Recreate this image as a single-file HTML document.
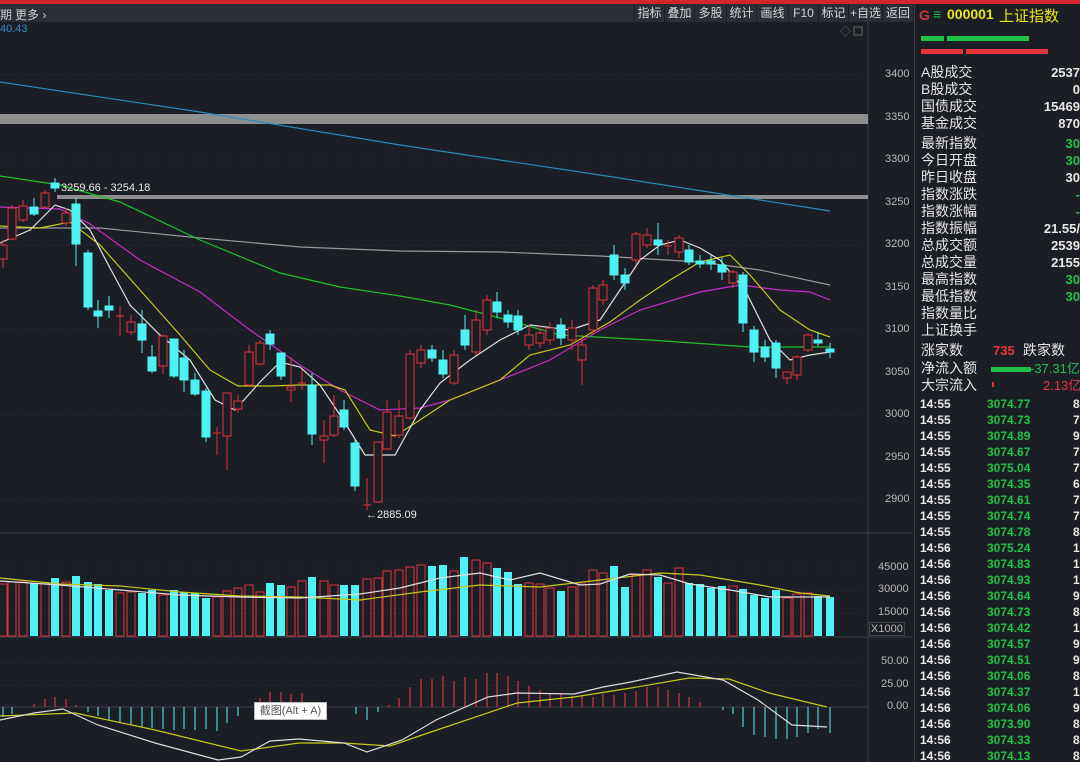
<!DOCTYPE html>
<html><head><meta charset="utf-8">
<style>
*{margin:0;padding:0;box-sizing:border-box}
body{width:1080px;height:762px;background:#1c1e25;overflow:hidden;position:relative;font-family:"Liberation Sans","Noto Sans CJK SC",sans-serif;color:#d8d8d8}
.top{position:absolute;left:0;top:0;width:1080px;height:4px;background:#d0262c}
.bar{position:absolute;left:0;top:4px;width:913px;height:18px;background:#2b2e37}
.bar span{position:absolute;top:2px;font-size:12px;color:#d0d0d0}
.btn{position:absolute;top:4px;height:18px;font-size:12px;line-height:18px;color:#d6d6d6;border-left:1px solid #1c1e25;text-align:center}
.rp{position:absolute;left:914px;top:4px;width:166px;height:758px;background:#1c1e25;border-left:1px solid #3a3d47;overflow:hidden}
.rp div{white-space:nowrap}
.row{position:absolute;left:6px;font-size:14px;line-height:17px;color:#e6e6e6;white-space:nowrap}
.val{position:absolute;right:0;font-size:13px;font-weight:bold;line-height:17px}
.t{position:absolute;left:5px;font-size:12px;font-weight:bold;color:#e8e8e8}
.p{position:absolute;left:72px;font-size:12px;font-weight:bold;color:#1fc246}
.v{position:absolute;left:158px;font-size:12px;font-weight:bold;color:#e8e8e8}
.ax{position:absolute;font-size:11px;color:#b8b8b8}
</style></head><body>
<div class="top"></div>
<div class="bar"><span style="left:0">期</span><span style="left:15px">更多 ›</span></div>
<div class="btn" style="left:634px;width:30px">指标</div>
<div class="btn" style="left:664px;width:30px">叠加</div>
<div class="btn" style="left:694px;width:32px">多股</div>
<div class="btn" style="left:726px;width:30px">统计</div>
<div class="btn" style="left:756px;width:32px">画线</div>
<div class="btn" style="left:788px;width:30px">F10</div>
<div class="btn" style="left:818px;width:30px">标记</div>
<div class="btn" style="left:848px;width:34px">+自选</div>
<div class="btn" style="left:882px;width:31px">返回</div>
<div style="position:absolute;left:0;top:23px;font-size:11px;color:#2a8fc0">40.43</div>

<svg width="913" height="762" style="position:absolute;left:0;top:0">
<g stroke="#2e313a" stroke-dasharray="1,2" stroke-width="1">
<line x1="0" y1="75" x2="868" y2="75"/><line x1="0" y1="160" x2="868" y2="160"/><line x1="0" y1="245" x2="868" y2="245"/><line x1="0" y1="330" x2="868" y2="330"/><line x1="0" y1="415" x2="868" y2="415"/><line x1="0" y1="500" x2="868" y2="500"/>
<line x1="0" y1="568" x2="868" y2="568"/><line x1="0" y1="590" x2="868" y2="590"/><line x1="0" y1="613" x2="868" y2="613"/>
<line x1="0" y1="662" x2="868" y2="662"/><line x1="0" y1="685" x2="868" y2="685"/>
</g>
<line x1="868" y1="22" x2="868" y2="762" stroke="#3a3d47"/>
<line x1="0" y1="533" x2="913" y2="533" stroke="#3a3d47"/>
<line x1="0" y1="637" x2="913" y2="637" stroke="#3a3d47"/>
<line x1="0" y1="707" x2="868" y2="707" stroke="#3a3d47"/>
<rect x="0" y="114" width="868" height="10" fill="#8e8e8e"/>
<rect x="57" y="195" width="811" height="4" fill="#8e8e8e"/>
<text x="840" y="35" fill="#666" font-size="11">◇</text><rect x="854" y="27" width="8" height="8" fill="none" stroke="#666"/>
<polyline fill="none" stroke="#2a8bb5" stroke-width="1.2" points="0,82 200,112 400,145 600,175 760,200 830,211"/>
<polyline fill="none" stroke="#9a9a9a" stroke-width="1.2" points="0,228 100,228 200,238 300,247 400,251 500,252 600,256 700,262 760,270 830,285"/>
<polyline fill="none" stroke="#1fbf2a" stroke-width="1.2" points="0,176 60,185 120,202 200,240 280,273 340,287 400,296 450,305 500,318 560,335 650,340 750,347 830,347"/>
<polyline fill="none" stroke="#c52ec5" stroke-width="1.2" points="0,207 60,209 90,224 140,260 200,292 250,330 300,365 340,390 380,410 420,408 450,400 500,380 550,360 600,330 640,310 700,292 740,285 780,290 810,292 830,300"/>
<polyline fill="none" stroke="#c8c81a" stroke-width="1.2" points="0,226 40,228 70,222 100,245 140,290 180,335 210,370 238,386 270,386 300,385 330,385 345,390 370,430 395,436 420,420 450,400 500,380 530,355 570,345 610,322 640,300 670,280 700,262 730,255 750,275 780,310 810,330 830,337"/>
<polyline fill="none" stroke="#e0e0e0" stroke-width="1.2" points="0,243 30,230 55,205 70,210 90,230 110,268 130,305 160,335 190,360 215,400 235,410 260,382 280,362 300,367 320,385 340,415 365,455 395,455 420,410 440,383 470,360 500,340 530,325 570,330 600,320 620,290 640,260 660,245 680,240 700,248 720,260 745,290 770,340 790,360 810,355 830,352"/>
<g id="c">
<g stroke="#e0343c" fill="none">
<line x1="3" y1="240" x2="3" y2="268"/><rect x="-1" y="245" width="8" height="14" fill="#1c1e25"/>
<line x1="12" y1="205" x2="12" y2="240"/><rect x="8" y="208" width="8" height="31" fill="#1c1e25"/>
<line x1="23" y1="200" x2="23" y2="222"/><rect x="19" y="206" width="8" height="14" fill="#1c1e25"/>
<line x1="45" y1="190" x2="45" y2="208"/><rect x="41" y="193" width="8" height="14" fill="#1c1e25"/>
<line x1="66" y1="208" x2="66" y2="226"/><rect x="62" y="213" width="8" height="10" fill="#1c1e25"/>
<line x1="120" y1="306" x2="120" y2="336"/><line x1="116" y1="316" x2="124" y2="316"/>
<line x1="131" y1="315" x2="131" y2="335"/><rect x="127" y="322" width="8" height="10" fill="#1c1e25"/>
<line x1="163" y1="334" x2="163" y2="374"/><rect x="159" y="336" width="8" height="30" fill="#1c1e25"/>
<line x1="217" y1="427" x2="217" y2="455"/><line x1="213" y1="433" x2="221" y2="433"/>
<line x1="227" y1="393" x2="227" y2="470"/><rect x="223" y="393" width="8" height="43" fill="#1c1e25"/>
<line x1="238" y1="395" x2="238" y2="413"/><rect x="234" y="401" width="8" height="8" fill="#1c1e25"/>
<line x1="249" y1="345" x2="249" y2="386"/><rect x="245" y="352" width="8" height="33" fill="#1c1e25"/>
<line x1="260" y1="340" x2="260" y2="365"/><rect x="256" y="343" width="8" height="21" fill="#1c1e25"/>
<line x1="291" y1="357" x2="291" y2="402"/><rect x="287" y="387" width="8" height="3" fill="#1c1e25"/>
<line x1="302" y1="370" x2="302" y2="390"/><line x1="298" y1="383" x2="306" y2="383"/>
<line x1="324" y1="420" x2="324" y2="463"/><rect x="320" y="436" width="8" height="4" fill="#1c1e25"/>
<line x1="334" y1="395" x2="334" y2="437"/><rect x="330" y="416" width="8" height="19" fill="#1c1e25"/>
<line x1="367" y1="478" x2="367" y2="510"/><line x1="363" y1="505" x2="371" y2="505"/>
<line x1="378" y1="442" x2="378" y2="503"/><rect x="374" y="442" width="8" height="60" fill="#1c1e25"/>
<line x1="387" y1="400" x2="387" y2="450"/><rect x="383" y="412" width="8" height="37" fill="#1c1e25"/>
<line x1="399" y1="400" x2="399" y2="438"/><rect x="395" y="416" width="8" height="19" fill="#1c1e25"/>
<line x1="410" y1="350" x2="410" y2="420"/><rect x="406" y="354" width="8" height="64" fill="#1c1e25"/>
<line x1="421" y1="345" x2="421" y2="368"/><rect x="417" y="350" width="8" height="13" fill="#1c1e25"/>
<line x1="454" y1="350" x2="454" y2="385"/><rect x="450" y="355" width="8" height="28" fill="#1c1e25"/>
<line x1="476" y1="310" x2="476" y2="355"/><rect x="472" y="320" width="8" height="32" fill="#1c1e25"/>
<line x1="487" y1="295" x2="487" y2="335"/><rect x="483" y="300" width="8" height="30" fill="#1c1e25"/>
<line x1="529" y1="325" x2="529" y2="350"/><rect x="525" y="335" width="8" height="10" fill="#1c1e25"/>
<line x1="540" y1="325" x2="540" y2="348"/><rect x="536" y="333" width="8" height="10" fill="#1c1e25"/>
<line x1="550" y1="322" x2="550" y2="345"/><rect x="546" y="328" width="8" height="12" fill="#1c1e25"/>
<line x1="572" y1="320" x2="572" y2="350"/><rect x="568" y="328" width="8" height="12" fill="#1c1e25"/>
<line x1="582" y1="335" x2="582" y2="385"/><rect x="578" y="345" width="8" height="15" fill="#1c1e25"/>
<line x1="593" y1="285" x2="593" y2="335"/><rect x="589" y="288" width="8" height="42" fill="#1c1e25"/>
<line x1="603" y1="280" x2="603" y2="305"/><rect x="599" y="285" width="8" height="15" fill="#1c1e25"/>
<line x1="636" y1="232" x2="636" y2="265"/><rect x="632" y="234" width="8" height="26" fill="#1c1e25"/>
<line x1="647" y1="228" x2="647" y2="248"/><rect x="643" y="235" width="8" height="10" fill="#1c1e25"/>
<line x1="668" y1="240" x2="668" y2="255"/><line x1="664" y1="246" x2="672" y2="246"/>
<line x1="679" y1="235" x2="679" y2="258"/><rect x="675" y="238" width="8" height="14" fill="#1c1e25"/>
<line x1="733" y1="270" x2="733" y2="288"/><rect x="729" y="272" width="8" height="11" fill="#1c1e25"/>
<line x1="787" y1="373" x2="787" y2="384"/><rect x="783" y="372" width="8" height="6" fill="#1c1e25"/>
<line x1="797" y1="355" x2="797" y2="380"/><rect x="793" y="357" width="8" height="18" fill="#1c1e25"/>
<line x1="808" y1="333" x2="808" y2="352"/><rect x="804" y="335" width="8" height="15" fill="#1c1e25"/>
</g>
<g stroke="#4ff2f4" fill="#4ff2f4">
<line x1="34" y1="198" x2="34" y2="216"/><rect x="30" y="207" width="8" height="7"/>
<line x1="55" y1="178" x2="55" y2="192"/><rect x="51" y="183" width="8" height="5"/>
<line x1="76" y1="198" x2="76" y2="266"/><rect x="72" y="204" width="8" height="40"/>
<line x1="88" y1="250" x2="88" y2="310"/><rect x="84" y="253" width="8" height="54"/>
<line x1="98" y1="300" x2="98" y2="328"/><rect x="94" y="311" width="8" height="5"/>
<line x1="109" y1="296" x2="109" y2="318"/><rect x="105" y="306" width="8" height="4"/>
<line x1="142" y1="310" x2="142" y2="353"/><rect x="138" y="324" width="8" height="16"/>
<line x1="152" y1="345" x2="152" y2="373"/><rect x="148" y="357" width="8" height="14"/>
<line x1="174" y1="339" x2="174" y2="378"/><rect x="170" y="339" width="8" height="37"/>
<line x1="184" y1="350" x2="184" y2="392"/><rect x="180" y="358" width="8" height="22"/>
<line x1="195" y1="373" x2="195" y2="396"/><rect x="191" y="380" width="8" height="14"/>
<line x1="206" y1="388" x2="206" y2="442"/><rect x="202" y="391" width="8" height="46"/>
<line x1="270" y1="330" x2="270" y2="350"/><rect x="266" y="334" width="8" height="10"/>
<line x1="281" y1="353" x2="281" y2="380"/><rect x="277" y="353" width="8" height="23"/>
<line x1="312" y1="373" x2="312" y2="445"/><rect x="308" y="385" width="8" height="49"/>
<line x1="344" y1="400" x2="344" y2="430"/><rect x="340" y="410" width="8" height="17"/>
<line x1="355" y1="440" x2="355" y2="491"/><rect x="351" y="443" width="8" height="43"/>
<line x1="432" y1="345" x2="432" y2="362"/><rect x="428" y="350" width="8" height="8"/>
<line x1="443" y1="350" x2="443" y2="378"/><rect x="439" y="360" width="8" height="14"/>
<line x1="465" y1="315" x2="465" y2="350"/><rect x="461" y="330" width="8" height="15"/>
<line x1="497" y1="292" x2="497" y2="318"/><rect x="493" y="302" width="8" height="10"/>
<line x1="508" y1="310" x2="508" y2="328"/><rect x="504" y="315" width="8" height="7"/>
<line x1="518" y1="310" x2="518" y2="335"/><rect x="514" y="316" width="8" height="14"/>
<line x1="561" y1="318" x2="561" y2="345"/><rect x="557" y="325" width="8" height="13"/>
<line x1="614" y1="245" x2="614" y2="280"/><rect x="610" y="255" width="8" height="20"/>
<line x1="625" y1="268" x2="625" y2="290"/><rect x="621" y="275" width="8" height="8"/>
<line x1="658" y1="223" x2="658" y2="255"/><rect x="654" y="240" width="8" height="5"/>
<line x1="689" y1="245" x2="689" y2="265"/><rect x="685" y="250" width="8" height="12"/>
<line x1="700" y1="255" x2="700" y2="268"/><rect x="696" y="261" width="8" height="3"/>
<line x1="711" y1="255" x2="711" y2="270"/><rect x="707" y="261" width="8" height="3"/>
<line x1="722" y1="258" x2="722" y2="280"/><rect x="718" y="265" width="8" height="7"/>
<line x1="743" y1="272" x2="743" y2="332"/><rect x="739" y="275" width="8" height="48"/>
<line x1="754" y1="326" x2="754" y2="362"/><rect x="750" y="330" width="8" height="22"/>
<line x1="765" y1="340" x2="765" y2="362"/><rect x="761" y="347" width="8" height="10"/>
<line x1="776" y1="340" x2="776" y2="378"/><rect x="772" y="343" width="8" height="25"/>
<line x1="818" y1="332" x2="818" y2="346"/><rect x="814" y="340" width="8" height="3"/>
<line x1="830" y1="343" x2="830" y2="358"/><rect x="826" y="349" width="8" height="3"/>
</g></g>
<text x="61" y="191" fill="#e8e8e8" font-size="11">3259.66 - 3254.18</text>
<text x="366" y="518" fill="#e8e8e8" font-size="11">←2885.09</text>
<g stroke="#e0343c" fill="none">
<rect x="-1" y="584" width="8" height="52"/><rect x="8" y="582" width="8" height="54"/><rect x="19" y="582" width="8" height="54"/><rect x="41" y="584" width="8" height="52"/><rect x="62" y="582" width="8" height="54"/><rect x="116" y="593" width="8" height="43"/><rect x="127" y="592" width="8" height="44"/><rect x="159" y="595" width="8" height="41"/><rect x="213" y="597" width="8" height="39"/><rect x="223" y="591" width="8" height="45"/><rect x="234" y="588" width="8" height="48"/><rect x="245" y="585" width="8" height="51"/><rect x="256" y="592" width="8" height="44"/><rect x="287" y="587" width="8" height="49"/><rect x="298" y="581" width="8" height="55"/><rect x="320" y="581" width="8" height="55"/><rect x="330" y="585" width="8" height="51"/><rect x="363" y="579" width="8" height="57"/><rect x="374" y="578" width="8" height="58"/><rect x="383" y="571" width="8" height="65"/><rect x="395" y="570" width="8" height="66"/><rect x="406" y="567" width="8" height="69"/><rect x="417" y="565" width="8" height="71"/><rect x="450" y="571" width="8" height="65"/><rect x="472" y="560" width="8" height="76"/><rect x="483" y="563" width="8" height="73"/><rect x="525" y="583" width="8" height="53"/><rect x="536" y="584" width="8" height="52"/><rect x="546" y="588" width="8" height="48"/><rect x="568" y="587" width="8" height="49"/><rect x="578" y="584" width="8" height="52"/><rect x="589" y="570" width="8" height="66"/><rect x="599" y="573" width="8" height="63"/><rect x="632" y="575" width="8" height="61"/><rect x="643" y="570" width="8" height="66"/><rect x="664" y="583" width="8" height="53"/><rect x="675" y="568" width="8" height="68"/><rect x="729" y="586" width="8" height="50"/><rect x="783" y="598" width="8" height="38"/><rect x="793" y="594" width="8" height="42"/><rect x="804" y="593" width="8" height="43"/>
</g>
<g fill="#4ff2f4">
<rect x="30" y="583" width="8" height="53"/><rect x="51" y="578" width="8" height="58"/><rect x="72" y="576" width="8" height="60"/><rect x="84" y="582" width="8" height="54"/><rect x="94" y="584" width="8" height="52"/><rect x="105" y="590" width="8" height="46"/><rect x="138" y="593" width="8" height="43"/><rect x="148" y="590" width="8" height="46"/><rect x="170" y="590" width="8" height="46"/><rect x="180" y="592" width="8" height="44"/><rect x="191" y="593" width="8" height="43"/><rect x="202" y="598" width="8" height="38"/><rect x="266" y="583" width="8" height="53"/><rect x="277" y="585" width="8" height="51"/><rect x="308" y="577" width="8" height="59"/><rect x="340" y="585" width="8" height="51"/><rect x="351" y="585" width="8" height="51"/><rect x="428" y="566" width="8" height="70"/><rect x="439" y="565" width="8" height="71"/><rect x="460" y="557" width="8" height="79"/><rect x="493" y="568" width="8" height="68"/><rect x="504" y="572" width="8" height="64"/><rect x="514" y="584" width="8" height="52"/><rect x="557" y="591" width="8" height="45"/><rect x="610" y="566" width="8" height="70"/><rect x="621" y="587" width="8" height="49"/><rect x="654" y="577" width="8" height="59"/><rect x="685" y="583" width="8" height="53"/><rect x="696" y="584" width="8" height="52"/><rect x="707" y="588" width="8" height="48"/><rect x="718" y="586" width="8" height="50"/><rect x="739" y="589" width="8" height="47"/><rect x="750" y="595" width="8" height="41"/><rect x="761" y="598" width="8" height="38"/><rect x="772" y="590" width="8" height="46"/><rect x="814" y="596" width="8" height="40"/><rect x="826" y="597" width="8" height="39"/>
</g>
<polyline fill="none" stroke="#c8c81a" stroke-width="1.2" points="0,578 60,584 120,586 180,592 240,596 300,597 360,600 420,592 480,585 540,587 600,580 660,573 700,575 760,585 800,593 830,596"/>
<polyline fill="none" stroke="#e0e0e0" stroke-width="1.2" points="0,581 60,585 120,590 180,595 240,597 300,598 360,594 400,588 440,578 480,573 510,580 540,573 580,585 600,584 630,574 660,575 690,584 730,590 770,597 800,597 830,597"/>
<g stroke="#4fd0d4" stroke-width="1.2">
<line x1="3" y1="707" x2="3" y2="717"/><line x1="12" y1="707" x2="12" y2="714"/><line x1="88" y1="707" x2="88" y2="712"/><line x1="98" y1="707" x2="98" y2="716"/><line x1="109" y1="707" x2="109" y2="720"/><line x1="120" y1="707" x2="120" y2="722"/><line x1="131" y1="707" x2="131" y2="725"/><line x1="142" y1="707" x2="142" y2="727"/><line x1="152" y1="707" x2="152" y2="728"/><line x1="163" y1="707" x2="163" y2="729"/><line x1="174" y1="707" x2="174" y2="730"/><line x1="184" y1="707" x2="184" y2="729"/><line x1="195" y1="707" x2="195" y2="730"/><line x1="206" y1="707" x2="206" y2="729"/><line x1="217" y1="707" x2="217" y2="731"/><line x1="227" y1="707" x2="227" y2="723"/><line x1="238" y1="707" x2="238" y2="716"/>
<line x1="356" y1="707" x2="356" y2="714"/><line x1="367" y1="707" x2="367" y2="720"/><line x1="378" y1="707" x2="378" y2="712"/>
<line x1="723" y1="707" x2="723" y2="710"/><line x1="733" y1="707" x2="733" y2="714"/><line x1="743" y1="707" x2="743" y2="727"/><line x1="754" y1="707" x2="754" y2="735"/><line x1="765" y1="707" x2="765" y2="737"/><line x1="776" y1="707" x2="776" y2="739"/><line x1="787" y1="707" x2="787" y2="739"/><line x1="797" y1="707" x2="797" y2="737"/><line x1="808" y1="707" x2="808" y2="733"/><line x1="818" y1="707" x2="818" y2="729"/><line x1="830" y1="707" x2="830" y2="733"/>
</g>
<g stroke="#d8343c" stroke-width="1.2">
<line x1="34" y1="707" x2="34" y2="704"/><line x1="45" y1="707" x2="45" y2="699"/><line x1="55" y1="707" x2="55" y2="697"/><line x1="66" y1="707" x2="66" y2="699"/><line x1="76" y1="707" x2="76" y2="705"/>
<line x1="260" y1="707" x2="260" y2="698"/><line x1="270" y1="707" x2="270" y2="692"/><line x1="281" y1="707" x2="281" y2="692"/><line x1="291" y1="707" x2="291" y2="694"/><line x1="302" y1="707" x2="302" y2="693"/>
<line x1="389" y1="707" x2="389" y2="705"/><line x1="399" y1="707" x2="399" y2="698"/><line x1="410" y1="707" x2="410" y2="687"/><line x1="421" y1="707" x2="421" y2="679"/><line x1="432" y1="707" x2="432" y2="679"/><line x1="443" y1="707" x2="443" y2="676"/><line x1="454" y1="707" x2="454" y2="681"/><line x1="465" y1="707" x2="465" y2="677"/><line x1="476" y1="707" x2="476" y2="679"/><line x1="487" y1="707" x2="487" y2="673"/><line x1="497" y1="707" x2="497" y2="673"/><line x1="508" y1="707" x2="508" y2="676"/><line x1="518" y1="707" x2="518" y2="681"/><line x1="529" y1="707" x2="529" y2="686"/><line x1="540" y1="707" x2="540" y2="690"/><line x1="550" y1="707" x2="550" y2="693"/><line x1="561" y1="707" x2="561" y2="693"/><line x1="572" y1="707" x2="572" y2="696"/><line x1="582" y1="707" x2="582" y2="696"/><line x1="593" y1="707" x2="593" y2="697"/><line x1="603" y1="707" x2="603" y2="694"/><line x1="614" y1="707" x2="614" y2="695"/><line x1="625" y1="707" x2="625" y2="693"/><line x1="636" y1="707" x2="636" y2="691"/><line x1="647" y1="707" x2="647" y2="687"/><line x1="658" y1="707" x2="658" y2="687"/><line x1="668" y1="707" x2="668" y2="690"/><line x1="679" y1="707" x2="679" y2="693"/><line x1="689" y1="707" x2="689" y2="697"/><line x1="700" y1="707" x2="700" y2="702"/>
</g>
<polyline fill="none" stroke="#c8c81a" stroke-width="1.2" points="0,716 75,713 155,730 241,751 299,743 344,743 390,746 431,732 517,703 574,697 631,688 689,678 729,679 769,693 827,707"/>
<polyline fill="none" stroke="#dcdcdc" stroke-width="1.2" points="0,720 34,713 63,709 98,725 155,743 218,760 241,757 270,741 299,739 344,743 367,752 402,740 436,720 488,697 517,693 574,694 603,687 631,682 677,672 723,680 758,700 792,725 827,727"/>
</svg>
<div style="position:absolute;left:254px;top:702px;width:73px;height:18px;background:#fff;border:1px solid #bbb;font-size:11px;color:#555;line-height:16px;text-align:center">截图(Alt + A)</div>

<div class="ax" style="left:885px;top:68px">3400</div>
<div class="ax" style="left:885px;top:111px">3350</div>
<div class="ax" style="left:885px;top:153px">3300</div>
<div class="ax" style="left:885px;top:196px">3250</div>
<div class="ax" style="left:885px;top:238px">3200</div>
<div class="ax" style="left:885px;top:281px">3150</div>
<div class="ax" style="left:885px;top:323px">3100</div>
<div class="ax" style="left:885px;top:366px">3050</div>
<div class="ax" style="left:885px;top:408px">3000</div>
<div class="ax" style="left:885px;top:451px">2950</div>
<div class="ax" style="left:885px;top:493px">2900</div>
<div class="ax" style="left:878px;top:561px">45000</div>
<div class="ax" style="left:878px;top:583px">30000</div>
<div class="ax" style="left:878px;top:606px">15000</div>
<div class="ax" style="left:869px;top:622px;border:1px solid #444;padding:0 1px">X1000</div>
<div class="ax" style="left:881px;top:655px">50.00</div>
<div class="ax" style="left:881px;top:678px">25.00</div>
<div class="ax" style="left:887px;top:700px">0.00</div>

<div class="rp">
<div style="position:absolute;left:4px;top:3px;font-size:14px;color:#d0343c;font-weight:bold">G</div>
<div style="position:absolute;left:18px;top:2px;font-size:14px;color:#1fc246">≡</div>
<div style="position:absolute;left:32px;top:2px;font-size:14px;color:#e8e818;font-weight:bold">000001</div>
<div style="position:absolute;left:84px;top:1px;font-size:15px;color:#e8e818">上证指数</div>
<div style="position:absolute;left:6px;top:32px;width:23px;height:5px;background:#1fc246"></div>
<div style="position:absolute;left:32px;top:32px;width:82px;height:5px;background:#1fc246"></div>
<div style="position:absolute;left:6px;top:45px;width:42px;height:5px;background:#e8343c"></div>
<div style="position:absolute;left:51px;top:45px;width:82px;height:5px;background:#e8343c"></div>
<div class="row" style="top:60px">A股成交</div><div class="val" style="top:60px;color:#e8e8e8">2537</div>
<div class="row" style="top:77px">B股成交</div><div class="val" style="top:77px;color:#e8e8e8">0</div>
<div class="row" style="top:94px">国债成交</div><div class="val" style="top:94px;color:#e8e8e8">15469</div>
<div class="row" style="top:111px">基金成交</div><div class="val" style="top:111px;color:#e8e8e8">870</div>
<div class="row" style="top:131px">最新指数</div><div class="val" style="top:131px;color:#1fc246">30</div>
<div class="row" style="top:148px">今日开盘</div><div class="val" style="top:148px;color:#1fc246">30</div>
<div class="row" style="top:165px">昨日收盘</div><div class="val" style="top:165px;color:#e8e8e8">30</div>
<div class="row" style="top:182px">指数涨跌</div><div class="val" style="top:182px;color:#1fc246">-</div>
<div class="row" style="top:199px">指数涨幅</div><div class="val" style="top:199px;color:#1fc246">-</div>
<div class="row" style="top:216px">指数振幅</div><div class="val" style="top:216px;color:#e8e8e8">21.55/</div>
<div class="row" style="top:233px">总成交额</div><div class="val" style="top:233px;color:#e8e8e8">2539</div>
<div class="row" style="top:250px">总成交量</div><div class="val" style="top:250px;color:#e8e8e8">2155</div>
<div class="row" style="top:267px">最高指数</div><div class="val" style="top:267px;color:#1fc246">30</div>
<div class="row" style="top:284px">最低指数</div><div class="val" style="top:284px;color:#1fc246">30</div>
<div class="row" style="top:301px">指数量比</div>
<div class="row" style="top:318px">上证换手</div>
<div class="row" style="top:338px">涨家数</div>
<div style="position:absolute;left:78px;top:339px;font-size:13px;font-weight:bold;color:#e8343c">735</div>
<div class="row" style="left:108px;top:338px">跌家数</div>
<div class="row" style="top:356px">净流入额</div>
<div style="position:absolute;left:76px;top:363px;width:40px;height:5px;background:#1fc246"></div>
<div style="position:absolute;left:115px;top:356px;font-size:13px;color:#1fc246;line-height:17px">-37.31亿</div>
<div class="row" style="top:373px">大宗流入</div>
<div style="position:absolute;left:77px;top:378px;width:2px;height:5px;background:#e8343c"></div>
<div style="position:absolute;left:128px;top:373px;font-size:13px;color:#e8343c;line-height:17px">2.13亿</div>
<div class="t" style="top:393px">14:55</div><div class="p" style="top:393px">3074.77</div><div class="v" style="top:393px">8</div>
<div class="t" style="top:409px">14:55</div><div class="p" style="top:409px">3074.73</div><div class="v" style="top:409px">7</div>
<div class="t" style="top:425px">14:55</div><div class="p" style="top:425px">3074.89</div><div class="v" style="top:425px">9</div>
<div class="t" style="top:441px">14:55</div><div class="p" style="top:441px">3074.67</div><div class="v" style="top:441px">7</div>
<div class="t" style="top:457px">14:55</div><div class="p" style="top:457px">3075.04</div><div class="v" style="top:457px">7</div>
<div class="t" style="top:473px">14:55</div><div class="p" style="top:473px">3074.35</div><div class="v" style="top:473px">6</div>
<div class="t" style="top:489px">14:55</div><div class="p" style="top:489px">3074.61</div><div class="v" style="top:489px">7</div>
<div class="t" style="top:505px">14:55</div><div class="p" style="top:505px">3074.74</div><div class="v" style="top:505px">7</div>
<div class="t" style="top:521px">14:55</div><div class="p" style="top:521px">3074.78</div><div class="v" style="top:521px">8</div>
<div class="t" style="top:537px">14:56</div><div class="p" style="top:537px">3075.24</div><div class="v" style="top:537px">1</div>
<div class="t" style="top:553px">14:56</div><div class="p" style="top:553px">3074.83</div><div class="v" style="top:553px">1</div>
<div class="t" style="top:569px">14:56</div><div class="p" style="top:569px">3074.93</div><div class="v" style="top:569px">1</div>
<div class="t" style="top:585px">14:56</div><div class="p" style="top:585px">3074.64</div><div class="v" style="top:585px">9</div>
<div class="t" style="top:601px">14:56</div><div class="p" style="top:601px">3074.73</div><div class="v" style="top:601px">8</div>
<div class="t" style="top:617px">14:56</div><div class="p" style="top:617px">3074.42</div><div class="v" style="top:617px">1</div>
<div class="t" style="top:633px">14:56</div><div class="p" style="top:633px">3074.57</div><div class="v" style="top:633px">9</div>
<div class="t" style="top:649px">14:56</div><div class="p" style="top:649px">3074.51</div><div class="v" style="top:649px">9</div>
<div class="t" style="top:665px">14:56</div><div class="p" style="top:665px">3074.06</div><div class="v" style="top:665px">8</div>
<div class="t" style="top:681px">14:56</div><div class="p" style="top:681px">3074.37</div><div class="v" style="top:681px">1</div>
<div class="t" style="top:697px">14:56</div><div class="p" style="top:697px">3074.06</div><div class="v" style="top:697px">9</div>
<div class="t" style="top:713px">14:56</div><div class="p" style="top:713px">3073.90</div><div class="v" style="top:713px">8</div>
<div class="t" style="top:729px">14:56</div><div class="p" style="top:729px">3074.33</div><div class="v" style="top:729px">8</div>
<div class="t" style="top:745px">14:56</div><div class="p" style="top:745px">3074.13</div><div class="v" style="top:745px">8</div>
</div>
</body></html>
